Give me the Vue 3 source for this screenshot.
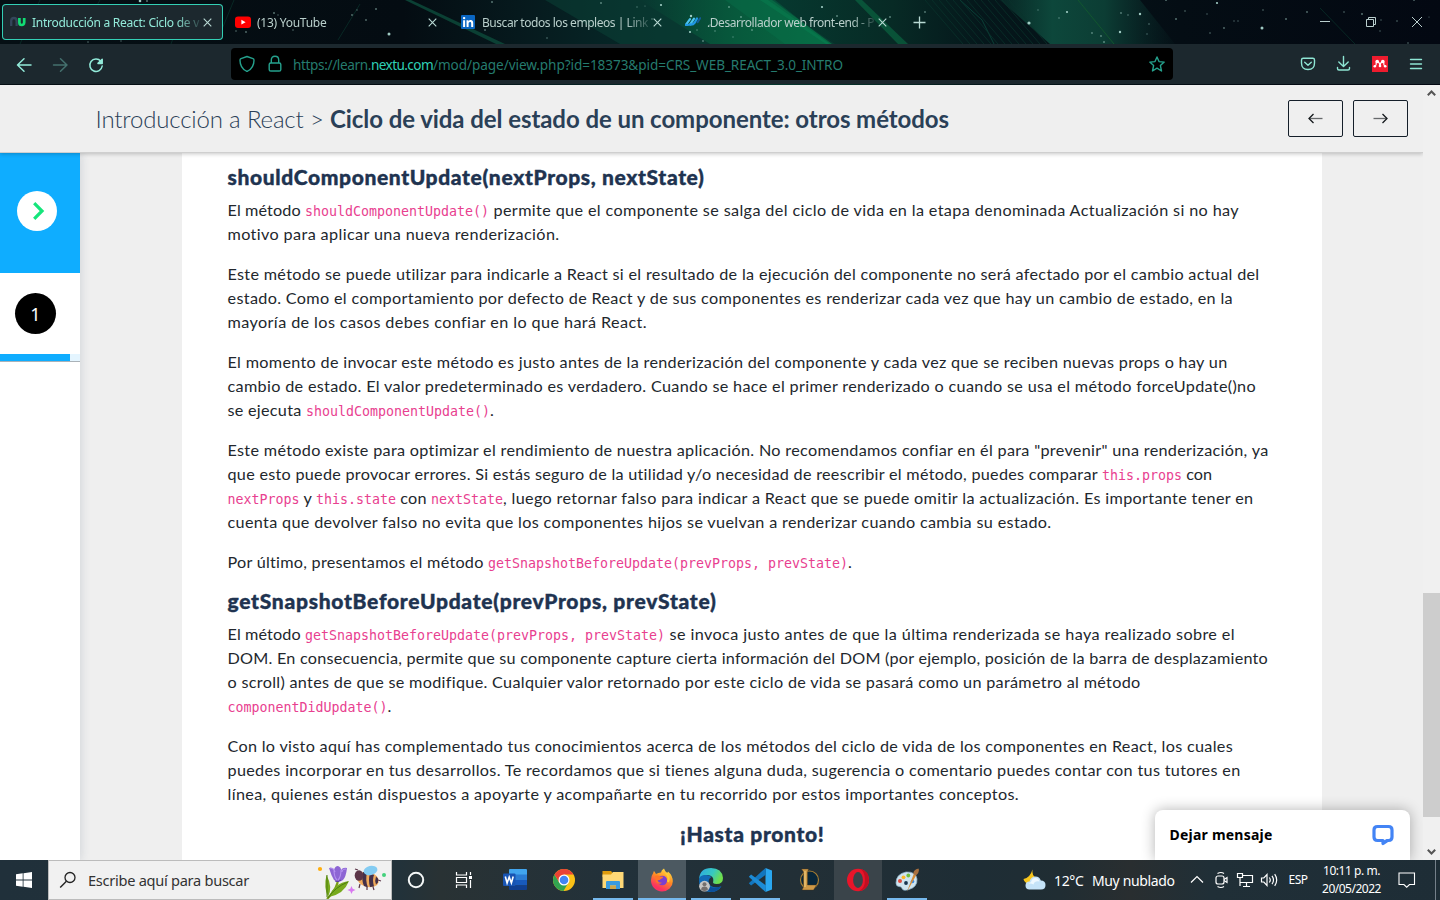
<script setup>
// Spreads the letters of a text run so that it fills the given width.
const vFit = {
  mounted(el, { value }) {
    if (!value) return
    const natural = el.getBoundingClientRect().width
    el.style.letterSpacing = (value - natural) / el.textContent.length + 'px'
  },
}

const t = (text, width) => ({ text, width })
const c = (text) => ({ text, width: text.length * 8, code: true })

const SNAP = 'getSnapshotBeforeUpdate(prevProps, prevState)'

const blocks = [
  { heading: 'shouldComponentUpdate(nextProps, nextState)', width: 477 },
  {
    lines: [
      [t('El método ', 77.5), c('shouldComponentUpdate()'), t(' permite que el componente se salga del ciclo de vida en la etapa denominada Actualización si no hay', 750)],
      [t('motivo para aplicar una nueva renderización.', 332)],
    ],
  },
  {
    lines: [
      [t('Este método se puede utilizar para indicarle a React si el resultado de la ejecución del componente no será afectado por el cambio actual del', 1032)],
      [t('estado. Como el comportamiento por defecto de React y de sus componentes es renderizar cada vez que hay un cambio de estado, en la', 1005.5)],
      [t('mayoría de los casos debes confiar en lo que hará React.', 419.5)],
    ],
  },
  {
    lines: [
      [t('El momento de invocar este método es justo antes de la renderización del componente y cada vez que se reciben nuevas props o hay un', 1000)],
      [t('cambio de estado. El valor predeterminado es verdadero. Cuando se hace el primer renderizado o cuando se usa el método forceUpdate()no', 1028.5)],
      [t('se ejecuta ', 78.5), c('shouldComponentUpdate()'), t('.', 4)],
    ],
  },
  {
    lines: [
      [t('Este método existe para optimizar el rendimiento de nuestra aplicación. No recomendamos confiar en él para "prevenir" una renderización, ya', 1041)],
      [t('que esto puede provocar errores. Si estás seguro de la utilidad y/o necesidad de reescribir el método, puedes comparar ', 874.5), c('this.props'), t(' con', 30)],
      [c('nextProps'), t(' y ', 16.5), c('this.state'), t(' con ', 35), c('nextState'), t(', luego retornar falso para indicar a React que se puede omitir la actualización. Es importante tener en', 750.5)],
      [t('cuenta que devolver falso no evita que los componentes hijos se vuelvan a renderizar cuando cambia su estado.', 824)],
    ],
  },
  { lines: [[t('Por último, presentamos el método ', 260.5), c(SNAP), t('.', 4)]] },
  { heading: SNAP, width: 489 },
  {
    lines: [
      [t('El método ', 77.5), c(SNAP), t(' se invoca justo antes de que la última renderizada se haya realizado sobre el', 570)],
      [t('DOM. En consecuencia, permite que su componente capture cierta información del DOM (por ejemplo, posición de la barra de desplazamiento', 1040.5)],
      [t('o scroll) antes de que se modifique. Cualquier valor retornado por este ciclo de vida se pasará como un parámetro al método', 913)],
      [c('componentDidUpdate()'), t('.', 4)],
    ],
  },
  {
    lines: [
      [t('Con lo visto aquí has complementado tus conocimientos acerca de los métodos del ciclo de vida de los componentes en React, los cuales', 1005.5)],
      [t('puedes incorporar en tus desarrollos. Te recordamos que si tienes alguna duda, sugerencia o comentario puedes contar con tus tutores en', 1013)],
      [t('línea, quienes están dispuestos a apoyarte y acompañarte en tu recorrido por estos importantes conceptos.', 791.5)],
    ],
  },
  { heading: '¡Hasta pronto!', width: 144.5, centered: true },
]

const tabs = [
  { icon: 'nu', title: 'Introducción a React: Ciclo de v', width: 167, active: true },
  { icon: 'yt', title: '(13) YouTube', width: 69.5 },
  { icon: 'in', title: 'Buscar todos los empleos | Link', width: 166 },
  { icon: 'wave', title: '.Desarrollador web front-end - P', width: 167 },
]

const stars = [
  [140, 1, 1.3], [147, 1, 1], [236, 31, .8], [246, 32, .9], [274, 13, 1], [278, 15, .7], [352, 15, .9], [357, 10, .7], [376, 9, 1], [366, 20, .9], [389, 34, 1.5], [88, 42, .8], [293, 30, .8], [121, 41, .7],
  [485, 30, .9], [492, 2, 1], [547, 38, .8], [601, 3, 1], [637, 7, .7], [661, 5, 1.1], [652, 19, .8], [645, 6, .6], [691, 16, 1.2], [729, 7, 1], [741, 17, 1], [752, 30, .9], [710, 25, .8], [822, 7, 1.1], [837, 16, 1], [890, 17, 1], [925, 12, .9], [690, 32, 1.1], [697, 30, .8], [715, 31, .8], [703, 41, .9], [733, 37, .7],
  [1029, 23, 1.6], [1038, 10, .7], [1067, 12, 1.1], [1059, 18, .8], [1121, 13, .9], [1128, 15, .8], [1140, 14, 1.2], [1092, 33, .9], [1101, 36, .9], [1120, 32, 1.2], [1149, 24, .8], [1147, 34, .7], [1104, 42, 1], [1166, 0, 1], [1176, 19, 1], [1185, 11, .8], [1217, 3, 1.1], [1207, 14, .7], [1210, 33, .8], [1224, 28, .9], [1234, 21, .7], [1238, 21, .7], [1262, 28, 1.5], [1263, 10, .8], [1286, 19, 1], [1307, 12, .9], [1344, 12, .8], [1362, 14, 1], [1381, 20, .7], [1397, 21, .8], [1380, 31, .7], [1414, 0, .9], [1408, 43, .8], [1429, 17, .6],
]
const streaks = Array.from({ length: 13 }, (_, i) => 925 + i * 7)

const apps = [
  { icon: 'word' }, { icon: 'chrome' }, { icon: 'folder', open: true }, { icon: 'firefox', open: true, lit: true },
  { icon: 'edge', open: true }, { icon: 'code', open: true }, { icon: 'lol' }, { icon: 'opera', hover: true }, { icon: 'paint', open: true },
]
</script>

<template>
  <div class="screen">
    <header class="tabstrip">
      <svg class="sky" width="1440" height="85" viewBox="0 0 1440 85">
        <defs>
          <linearGradient id="sky" x1="0" x2="1440" y1="0" y2="0" gradientUnits="userSpaceOnUse">
            <stop offset="0" stop-color="#050f14" /><stop offset=".28" stop-color="#040c12" />
            <stop offset=".36" stop-color="#06191d" /><stop offset=".42" stop-color="#062425" />
            <stop offset=".54" stop-color="#06382f" /><stop offset=".62" stop-color="#072a25" />
            <stop offset=".68" stop-color="#05171b" /><stop offset=".82" stop-color="#040d14" /><stop offset="1" stop-color="#030812" />
          </linearGradient>
          <linearGradient id="band" x1="0" x2="1" y1="0" y2="0">
            <stop offset="0" stop-color="#075a3b" stop-opacity="0" /><stop offset=".5" stop-color="#07593c" /><stop offset="1" stop-color="#086a42" />
          </linearGradient>
          <linearGradient id="band2" x1="0" x2="1" y1="0" y2="0">
            <stop offset="0" stop-color="#0d4a3c" stop-opacity=".3" /><stop offset=".3" stop-color="#0d473b" /><stop offset=".6" stop-color="#0c3d34" /><stop offset="1" stop-color="#0a2a2a" stop-opacity=".1" />
          </linearGradient>
        </defs>
        <rect width="1440" height="85" fill="url(#sky)" />
        <path d="M545 0h225l65 44H620z" fill="#0a4437" opacity=".5" />
        <path d="M640 0h132l60 44H710z" fill="url(#band)" />
        <path d="M725 0h50l55 44h-45z" fill="#08744a" opacity=".4" />
        <path d="M768 0l62 44h-4L760 0z" fill="#0a8a55" opacity=".35" />
        <path d="M855 0h7l46 44h-10z" fill="#0a6440" opacity=".7" />
        <path d="M405 0h6l94 44h-9z" fill="#0b4034" />
        <path d="M1000 0h140l35 44h-125z" fill="url(#band2)" />
        <path d="M1078 0l36 44" stroke="#12562f" />
        <path d="M960 0l22 20 12 24" stroke="#0e5c49" opacity=".6" fill="none" />
        <g stroke="#0a352c" opacity=".7"><path v-for="x in streaks" :key="x" :d="`M${x} 0l38 44`" /></g>
        <g stroke="#0b3a30" opacity=".6" stroke-width="1"><path d="M234 0l-14 34M176 30l-5 14M360 4l-22 36M100 0L78 40M40 0L20 44M1320 8l35 36" /></g>
        <circle v-for="(s, i) in stars" :key="i" :cx="s[0]" :cy="s[1]" :r="s[2]" fill="#a9d5cc" :opacity="s[2] > 1 ? .95 : .5" />
      </svg>
      <div v-for="tab in tabs" :key="tab.icon" class="tab" :class="{ active: tab.active }">
        <svg class="fav" width="16" height="16" viewBox="0 0 16 16">
          <g v-if="tab.icon === 'nu'" fill="none" stroke-width="2.3">
            <path d="M1.2 12V7q0-3 2.7-3t2.7 3v5" stroke="#34465a" />
            <path d="M9.4 4v4.5q0 2.5 2.3 2.5t2.5-2.5V4" stroke="#12dc74" stroke-width="2.7" />
          </g>
          <g v-else-if="tab.icon === 'yt'"><rect x="0" y="2.5" width="16" height="11.5" rx="3" fill="#f00" /><path d="M6.4 5.8v4.8l4.2-2.4z" fill="#fff" /></g>
          <g v-else-if="tab.icon === 'in'">
            <rect x="1" y="1" width="14" height="14" rx="1" fill="#0a66c2" />
            <path d="M3.1 6.3h2V13h-2zM6.5 6.3h2V7.4C9 6.5 9.8 6.1 10.7 6.1c1.9 0 2.5 1.3 2.5 3.1V13h-2V9.6c0-1-.2-1.7-1.2-1.7-1 0-1.4.8-1.4 1.7V13h-2z" fill="#fff" /><circle cx="4.1" cy="4.1" r="1.2" fill="#fff" />
          </g>
          <g v-else fill="none" stroke-width="2.2" stroke-linecap="round" stroke-linejoin="round">
            <path d="M1 10.700L5 5.200M5.200 10.300L9 4.600" stroke="#4cc4ee" /><path d="M1 10.900q2.500.3 4.200-.6M5.200 10.500q3 .3 4.600-2L12 4.400" stroke="#1f97e4" /><path d="M12.600 8.200l2.600-4" stroke="#145b97" stroke-width="2" />
          </g>
        </svg>
        <div class="title"><span v-fit="tab.width">{{ tab.title }}</span></div>
        <svg class="x" width="9" height="9" viewBox="0 0 9 9"><path d="M.7.7l7.6 7.6M8.3.7L.7 8.3" /></svg>
      </div>
      <svg class="plus" width="13" height="13" viewBox="0 0 13 13"><path d="M6.5.5v12M.5 6.5h12" /></svg>
      <svg class="winctl" width="104" height="12" viewBox="0 0 104 12"><path d="M1 5.500h10M47.500 3.500h7v7h-7zM49.500 3.500v-2h7v7h-2M93 1l10 10M103 1L93 11" /></svg>
    </header>

    <nav class="toolbar">
      <svg class="navicons" width="90" height="16" viewBox="0 0 90 16">
        <path d="M15 8H1.500M8 1.800L1.500 8 8 14.200" /><path class="dim" d="M37.500 8H51M44.500 1.800L51 8l-6.500 6.200" />
        <path d="M84.800 4.200A6.200 6.200 0 1 0 86.200 9" /><path class="solid" d="M86.200 2.200v4.200H82z" />
      </svg>
      <div class="url">
        <svg class="lockset" width="44" height="18" viewBox="0 0 44 18">
          <path d="M9 1.500l6 2.200q1 .4 1 1.500c0 5-2.400 8.700-6.200 10.800q-.8.400-1.600 0C4.400 13.900 2 10.200 2 5.200q0-1.100 1-1.500z" />
          <rect x="31.200" y="8" width="11.600" height="8" rx="1.600" /><path d="M33.300 8V4.900q0-3.700 3.700-3.700t3.700 3.700V8" />
        </svg>
        <div class="address"><span v-fit="78">https://learn.</span><b v-fit="62">nextu.com</b><span v-fit="410">/mod/page/view.php?id=18373&amp;pid=CRS_WEB_REACT_3.0_INTRO</span></div>
        <svg class="star" width="16" height="16" viewBox="0 0 16 16"><path d="M8 .9l2 4.700 5.200.5-3.800 3.500 1.100 5.400L8 12.200 3.500 15l1.100-5.400L.8 6.100 6 5.600z" /></svg>
      </div>
      <svg class="extras" width="124" height="18" viewBox="0 0 124 18">
        <g fill="none" stroke="#8ee6d4" stroke-width="1.400" stroke-linecap="round" stroke-linejoin="round">
          <path d="M3.200 3.200h9.600q1.700 0 1.700 1.700v3q0 6.600-6.500 6.600T1.500 7.900v-3q0-1.700 1.700-1.700zM4.700 7.200L8 10.200l3.300-3" />
          <path d="M43.500 1.500V11M38.800 7l4.700 4.500L48.200 7M37.500 12.500v1q0 1.500 1.500 1.500h9q1.500 0 1.500-1.500v-1" />
          <path d="M110.500 4.500h11M110.500 9h11M110.500 13.500h11" />
        </g>
        <rect x="72" y="1" width="16" height="16" fill="#ee1c2e" />
        <path d="M75 11.500q1.500-1 1.300-4.500M85 11.500q-1.500-1-1.300-4.500M77.500 6.500q2.300 1 2.500 4.500M82.500 6.500q-2.300 1-2.500 4.500" fill="none" stroke="#fff" stroke-width="1.200" />
        <g fill="#fff"><circle cx="77.200" cy="6.500" r="1.800" /><circle cx="82.800" cy="6.500" r="1.800" /><circle cx="74.800" cy="11.200" r="1.300" /><circle cx="80" cy="11" r="1.300" /><circle cx="85.200" cy="11.200" r="1.300" /></g>
      </svg>
    </nav>

    <section class="page">
      <div class="site">
        <div class="pagehead">
          <h1><span v-fit="234.500">Introducción a React &gt; </span><b v-fit="619">Ciclo de vida del estado de un componente: otros métodos</b></h1>
          <button><svg width="15" height="11" viewBox="0 0 15 11"><path class="shaft" d="M1 5.500h13.500" /><path d="M5.500 1L1 5.500 5.500 10" /></svg></button>
          <button><svg width="15" height="11" viewBox="0 0 15 11"><path class="shaft" d="M.5 5.500H14" /><path d="M9.500 1L14 5.500 9.500 10" /></svg></button>
        </div>
        <div class="columns">
          <aside>
            <div class="toggle"><span><svg width="12" height="18" viewBox="0 0 12 18"><path d="M1.200 1.200L9 9l-7.800 7.800" /></svg></span></div>
            <div class="step"><span>1</span></div>
            <div class="progress"><i></i></div>
          </aside>
          <article>
            <template v-for="(b, i) in blocks" :key="i">
              <h3 v-if="b.heading" :class="{ centered: b.centered }"><span v-fit="b.width">{{ b.heading }}</span></h3>
              <p v-else>
                <span v-for="(line, j) in b.lines" :key="j" class="line"><component :is="s.code ? 'code' : 'span'" v-for="(s, k) in line" :key="k" v-fit="s.width">{{ s.text }}</component></span>
              </p>
            </template>
          </article>
        </div>
        <div class="chat">
          <b v-fit="103">Dejar mensaje</b>
          <svg width="22" height="22" viewBox="0 0 22 22"><path d="M5.500 2.500h11Q20 2.500 20 6v7q0 3.500-3.500 3.500h-1.200q-1.700 1-4.300 3v-3H5.500Q2 16.500 2 13V6Q2 2.500 5.500 2.500z" /></svg>
        </div>
      </div>
      <div class="scroll">
        <svg width="9" height="7" viewBox="0 0 9 7"><path d="M.8 5.300L4.500 1.500l3.700 3.800" /></svg>
        <i></i>
        <svg width="9" height="7" viewBox="0 0 9 7"><path d="M.8 1.700L4.500 5.500l3.700-3.800" /></svg>
      </div>
    </section>

    <footer class="taskbar">
      <div class="start"><svg width="16" height="16" viewBox="0 0 16 16"><path d="M0 2.300L6.700 1.300v6.300H0zM7.500 1.200L16 0v7.600H7.500zM0 8.400h6.700v6.300L0 13.700zM7.500 8.400H16V16l-8.500-1.200z" fill="#fff" /></svg></div>
      <div class="search">
        <svg width="18" height="18" viewBox="0 0 18 18"><circle cx="11" cy="6.500" r="5" fill="none" stroke="#222" stroke-width="1.300" /><path d="M7.400 10.200L1.200 16.400" stroke="#222" stroke-width="1.400" /></svg>
        <span v-fit="161">Escribe aquí para buscar</span>
        <svg class="flowers" width="72" height="38" viewBox="0 0 72 38">
          <circle cx="3" cy="8" r="2.100" fill="#ffae0d" /><circle cx="67" cy="14" r="2" fill="#44d17c" />
          <path d="M21 18q0 9-11 20" stroke="#7a9e18" stroke-width="2.200" fill="none" />
          <path d="M9.500 14q-3 12 1.500 22 5-10-1.500-22zM32 20Q17 22 12 36q15-3 20-16z" fill="#78aa1d" /><path d="M10 14v22M31 21Q18 26 11 37" stroke="#4c7c11" stroke-width="1" fill="none" />
          <path d="M12 7q4-1 5 2 1-4 4-4 3 1 3 4 2-3 6-2-1 9-4 12-4 3-9 0-3-5-5-12z" fill="#8d65d4" /><path d="M17 9q0 7 3 10M24 9q0 7-3 10M13 7q4 0 5 4M29 8q-4 0-4 3" stroke="#b491ef" stroke-width="1.100" fill="none" /><path d="M18 20q3 2 6-1" stroke="#5b3ba5" fill="none" />
          <path d="M34.500 25l1.200 2.800 2.800 1.200-2.800 1.200-1.200 2.800-1.200-2.800-2.800-1.200 2.800-1.200z" fill="#d979f0" />
          <ellipse cx="51" cy="18.500" rx="11" ry="7.500" transform="rotate(14 51 18.500)" fill="#efa95c" />
          <path d="M46 11q-2 7 1 14l4 1.500q-3-7-1-15zM53 12q-2 7 0 14l4-.5q-2-7 0-11.500zM59 15.500q-1.500 4 0 8l2-2v-4z" fill="#43304a" />
          <ellipse cx="42" cy="14.500" rx="4.300" ry="5.200" fill="#5b3548" /><path d="M61 19l3 1M41 9l-3-1M43 23l-1 4M50 26v3M56 26l1 3" stroke="#5b3548" stroke-width="1.200" fill="none" />
          <ellipse cx="53.500" cy="9.500" rx="7" ry="4.500" transform="rotate(-12 53.500 9.500)" fill="#84ccf2" />
        </svg>
      </div>
      <div class="cell"><svg width="18" height="18" viewBox="0 0 18 18"><circle cx="9" cy="9" r="7.200" fill="none" stroke="#f4f7f7" stroke-width="2" /></svg></div>
      <div class="cell view"><svg width="18" height="18" viewBox="0 0 18 18"><path d="M1.500 1v3h10V1M1.500 17v-3h10v3M1.500 6.500h10v5h-10zM15.500 1v3M15.500 9v8" fill="none" stroke="#fff" stroke-width="1.200" /><rect x="14" y="5" width="3" height="3" fill="#fff" /></svg></div>
      <div class="apps">
        <div v-for="a in apps" :key="a.icon" class="app" :class="{ open: a.open, lit: a.lit, hover: a.hover }">
          <svg width="24" height="24" viewBox="0 0 24 24">
            <g v-if="a.icon === 'word'">
              <path d="M6 2q0-1 1-1h16q1 0 1 1v5H6z" fill="#41a5ee" /><path d="M6 6.500h18V12H6z" fill="#2b7cd3" /><path d="M6 12h18v5.500H6z" fill="#185abd" /><path d="M6 17.500h18V21q0 1-1 1H7q-1 0-1-1z" fill="#103f91" />
              <rect x="0" y="5.500" width="12.500" height="12.500" rx="1" fill="#1854b3" /><path d="M2.300 8.500l1.800 6.500L6.200 9l2.200 6 1.800-6.500" fill="none" stroke="#fff" stroke-width="1.600" />
            </g>
            <g v-else-if="a.icon === 'chrome'">
              <circle cx="12" cy="12" r="11" fill="#fbc116" /><path d="M12 12L2.500 6.500A11 11 0 0 1 21.500 6.500H12z" fill="#ea4335" /><path d="M2.500 6.500A11 11 0 0 0 11.500 23l5-8.500L12 12 7.300 14.500z" fill="#32a350" /><path d="M2.500 6.500l4.800 8L12 7z" fill="#ea4335" /><circle cx="12" cy="12" r="5.500" fill="#fff" /><circle cx="12" cy="12" r="4.300" fill="#4285f4" />
            </g>
            <g v-else-if="a.icon === 'folder'">
              <path d="M1.500 3h8.500l2 2.500V9H1.500z" fill="#df9b0d" /><path d="M1.500 6.500H10L12 4h10.500v16h-21z" fill="#ffd876" /><path d="M5 21v-7q0-1 1-1h12q1 0 1 1v7h-4v-3.500H9V21z" fill="#3a9be0" /><path d="M9 17.500h6V21H9z" fill="#cfa64b" />
            </g>
            <g v-else-if="a.icon === 'firefox'">
              <defs><linearGradient id="ff" x1=".8" y1="0" x2=".3" y2="1"><stop offset="0" stop-color="#ffe64a" /><stop offset=".45" stop-color="#ff8c23" /><stop offset=".85" stop-color="#fb3261" /></linearGradient></defs>
              <path d="M14 .5q1 3 3 4.500 1-.8 1-1.500 4.800 4 4.800 10A11 10 0 0 1 12 23.500 11 11 0 0 1 1 12Q1 8 3.200 5q.3-1.500.8-2 1 1 2 3 2-1.500 5-1.500.3-2.500 3-4z" fill="url(#ff)" />
              <circle cx="12.300" cy="12.500" r="4.800" fill="#7b3fd0" /><path d="M5 8q3-1 5 .5l3 .2q.5 1.300-1.800 2-1.500 1.800-4 1.500 1.500 3 5 2.500Q9 17 6 14z" fill="#ff7526" /><path d="M16 5q4 4 2 9" stroke="#ffcb33" stroke-width="2.200" fill="none" />
            </g>
            <g v-else-if="a.icon === 'edge'">
              <defs><linearGradient id="eg" x1="0" y1="0" x2="1" y2=".4"><stop offset="0" stop-color="#2ca7e5" /><stop offset=".6" stop-color="#37c9c0" /><stop offset="1" stop-color="#6fdf4c" /></linearGradient></defs>
              <path d="M0 11Q1 0 12 0t12 10q0 6-6.500 6-4.500 0-3.200-3Q15 8 9 7 3 7 0 11z" fill="url(#eg)" /><path d="M0 12q0-5 7-5 3.500 0 5.500 2-4 2-2.500 6.500T20 19l2.500-.8Q19 24 12 24 0 24 0 12z" fill="#126bb7" /><path d="M8 15q2 7 14 3.500Q18 24 12 24 7 22 8 15z" fill="#0c4f9a" />
              <circle cx="5.500" cy="18.200" r="5.400" fill="#c6c5c3" /><circle cx="5.500" cy="16.300" r="2" fill="#746f6d" /><path d="M2 21.500q.5-3 3.500-3t3.500 3q-3.500 3-7 0z" fill="#746f6d" />
            </g>
            <g v-else-if="a.icon === 'code'">
              <path d="M17.500 0L24 2.500v19L17.500 24z" fill="#2aa7f0" /><path d="M17.500 0L.8 15.200l2.300 2.300L18 6.500z" fill="#1276bf" /><path d="M17.500 24L.8 8.800l2.300-2.300L18 17.500z" fill="#1c8bd6" />
            </g>
            <g v-else-if="a.icon === 'lol'">
              <circle cx="12.500" cy="12" r="9" fill="#08263a" stroke="#a67c32" stroke-width="1.200" /><path d="M4.500 1h7L10.500 4v13h9L16.500 22H5l1.500-3V4z" fill="#ce9947" stroke="#493519" stroke-width=".4" /><path d="M8 3v16" stroke="#f4d386" />
            </g>
            <g v-else-if="a.icon === 'opera'"><ellipse cx="12" cy="12" rx="11" ry="11.300" fill="#e9152a" /><path d="M13 23.300q10-2 10-11.300T14 .7q5 3 5 11.300t-6 11.300z" fill="#c20f22" /><ellipse cx="12" cy="12" rx="4.900" ry="7.900" fill="#3a444a" /></g>
            <g v-else>
              <path d="M1 15Q1 6 11 4q10-.5 11 7 .5 8-8 10.500-6 2-7-1-.3-2-3-2-3-.2-3-3.500z" fill="#cfe4ef" stroke="#8cb3cb" stroke-width=".7" />
              <circle cx="5" cy="13" r="2" fill="#e04c3f" /><circle cx="8.500" cy="9.300" r="1.900" fill="#fcb729" /><circle cx="13.300" cy="7.500" r="1.900" fill="#71bf3d" /><circle cx="17.500" cy="13.500" r="1.800" fill="#3b8be5" /><circle cx="11" cy="15" r="1.900" fill="#17354f" />
              <path d="M12 23.500l6.500-17 2.500 1z" fill="#d68c38" /><path d="M18.300 6.300Q18 2 23.500.5 25 4 21 7.500z" fill="#a9703e" />
            </g>
          </svg>
        </div>
      </div>
      <div class="tray">
        <svg class="weather" width="24" height="22" viewBox="0 0 24 22">
          <path d="M9.500.5q-1 6 4 8.500L5 15q-4-2-4.500-5Q7 9 9.500.5z" fill="#f7c51c" /><path d="M6.500 20.500q-4 0-4-4t4-4Q8 7.500 12.500 7.500q4 0 5.300 4 4.700 0 4.700 4.500t-4.500 4.500z" fill="#c5e3f8" /><path d="M8 13q1-4 4.500-4 3 0 4 3.500-5-1-6 3-2-1.500-5-1z" fill="#eef8ff" />
        </svg>
        <span class="temp" v-fit="29.500">12°C</span><span class="cloudy" v-fit="82.500">Muy nublado</span>
        <svg class="status" width="94" height="20" viewBox="0 0 94 20">
          <g fill="none" stroke="#fff" stroke-width="1.200">
            <path d="M1 12.500l6-6 6 6" /><rect x="26" y="6" width="8" height="8" rx="2" /><path d="M34 9.500l3-2v5l-3-2M27.500 3.500q3.500-2 6.500 0M27.500 16.500q3.500 2 6.500 0" />
            <path d="M53 5.500h9.500v7H50.500M47.500 3.500h5v4h-5zM50 7.500v8.500M56.500 12.500v4M53 16.500h7" /><path d="M71.500 8v4h2.300l3.200 3.500v-11L73.800 8zM79.300 7.500q2 2.500 0 5M82 5.800q3 4.200 0 8.400M84.700 4.200q4 5.800 0 11.600" />
          </g>
        </svg>
        <span class="lang" v-fit="19">ESP</span>
        <div class="clock"><span v-fit="57">10:11 p. m.</span><span v-fit="59">20/05/2022</span></div>
        <svg class="note" width="18" height="18" viewBox="0 0 18 18"><path d="M1 2h15.500v11.500h-5L8.700 16.200l-2.800-2.700H1z" fill="none" stroke="#fff" stroke-width="1.100" /></svg>
        <i class="peek"></i>
      </div>
    </footer>
  </div>
</template>

<style>
body { margin: 0; overflow: hidden; }
</style>

<style scoped>
* { box-sizing: border-box; }
svg { display: block; flex: none; }
.screen { width: 1440px; height: 900px; display: flex; flex-direction: column; overflow: hidden; font-family: "Noto Sans", "Open Sans", sans-serif; background: #efefef; }

.tabstrip { position: relative; height: 44px; flex: none; display: flex; align-items: flex-start; gap: 4px; padding: 4px 0 0 2px; background: #050f14; }
.sky { position: absolute; left: 0; top: 0; }
.tab { position: relative; width: 221px; height: 36px; display: flex; align-items: center; padding: 0 11px 0 8px; color: #b9cfcb; font-size: 12px; }
.tab.active { background: #1c282e; box-shadow: inset 0 0 0 1px #33cfb5; border-radius: 4px; color: #92ead9; }
.tab .title { flex: 1; margin-left: 6px; white-space: pre; line-height: 20px; height: 20px; margin-top: 1px; margin-right: 2px; -webkit-mask-image: linear-gradient(to right, #000 85%, transparent 102%); mask-image: linear-gradient(to right, #000 85%, transparent 102%); }
.x path, .plus path, .winctl path { fill: none; stroke: #b9dad4; stroke-width: 1.1; }
.plus { position: relative; margin: 12px 0 0 11px; }
.plus path { stroke-width: 1.3; }
.winctl { position: relative; margin: 12px 17px 0 auto; }
.winctl path { stroke: #bacfce; stroke-width: 1; }

.toolbar { position: relative; height: 40px; flex: none; display: flex; align-items: center; background: #1c282e; }
.navicons { margin: 1px 0 0 16px; }
.navicons path { fill: none; stroke: #92ead9; stroke-width: 1.5; stroke-linecap: round; stroke-linejoin: round; }
.navicons .dim { stroke: #44706e; }
.navicons .solid { fill: #92ead9; }
.url { width: 942px; height: 32px; margin-left: 125px; background: #000; border-radius: 4px; display: flex; align-items: center; padding: 0 8px 0 7px; }
.lockset path, .lockset rect, .star path { fill: none; stroke: #25a18d; stroke-width: 1.4; stroke-linejoin: round; }
.address { margin-left: 11px; flex: 1; font-size: 13.6px; color: #257b6e; white-space: pre; font-weight: 400; padding-top: 1px; }
.address b { font-weight: 400; color: #2fd0b6; }
.extras { margin: -1px 0 0 127px; }

.page { height: 776px; flex: none; display: flex; border-top: 1px solid #08181b; }
.site { position: relative; width: 1423px; height: 775px; display: flex; flex-direction: column; background: #efefef; overflow: hidden; }
.pagehead { position: relative; z-index: 2; height: 68px; flex: none; display: flex; align-items: center; padding: 0 15px 0 95.5px; background: #efefef; border-bottom: 1px solid #cfcfcf; box-shadow: 0 1px 4px rgba(0, 0, 0, .22); }
h1 { margin: 0; flex: 1; font: 300 24px/36px Lato, sans-serif; color: #2a4057; white-space: pre; }
h1 b { font-weight: 700; }
button { width: 55px; height: 37px; margin-left: 10px; padding: 0; display: flex; align-items: center; justify-content: center; border: 1px solid #141e29; border-radius: 2px; background: none; }
button path { fill: none; stroke: #14181c; stroke-width: 1.3; }
button .shaft { stroke: #66696b; }
.columns { flex: 1; display: flex; min-height: 0; }
aside { width: 80px; background: #fff; box-shadow: 0 0 10px rgba(40, 60, 90, .18); }
.toggle { height: 120px; background: #0fadff; display: flex; align-items: center; padding: 0 0 4px 17px; }
.toggle span { width: 40px; height: 40px; border-radius: 50%; background: #fff; display: flex; align-items: center; justify-content: center; padding-left: 3px; }
.toggle path { fill: none; stroke: #15e57b; stroke-width: 3.2; }
.step { height: 81px; padding: 20px 0 0 15px; }
.step span { width: 41px; height: 41px; border-radius: 50%; background: #000; color: #fff; display: flex; align-items: center; justify-content: center; font-size: 18px; padding-top: 1px; }
.progress { height: 8px; background: #e4f5ff; border-bottom: 1px solid #aab2b8; }
.progress i { display: block; width: 70px; height: 7px; background: #0fadff; }
article { width: 1140px; margin-left: 102px; background: #fff; padding: 13px 45px 0 45.5px; overflow: hidden; color: #22272d; font: 400 16.2px/24px Lato, sans-serif; }
h3 { margin: 0 0 8px; height: 24px; font: 900 21px/22px Lato, sans-serif; color: #203350; white-space: pre; -webkit-text-stroke: .4px #203350; }
h3.centered { text-align: center; padding-top: 1px; }
p { margin: 0 0 16px; }
.line { display: block; height: 24px; white-space: pre; font-variant-ligatures: none; }
code { font-family: "DejaVu Sans Mono", "Liberation Mono", monospace; font-size: 13.3px; color: #e8408f; line-height: 20px; }
.chat { position: absolute; z-index: 3; right: 13px; bottom: 0; width: 255px; height: 50px; background: #fff; border-radius: 8px 8px 0 0; box-shadow: 0 0 14px rgba(0, 0, 0, .3); display: flex; align-items: center; justify-content: space-between; padding: 0 16px 0 14.5px; color: #000; font-size: 14px; white-space: pre; }
.chat b { margin-top: -1px; }
.chat path { fill: none; stroke: #4384f5; stroke-width: 3.2; stroke-linejoin: round; }
.scroll { width: 17px; background: #f0f0f0; display: flex; flex-direction: column; align-items: center; padding: 5px 0 5px; }
.scroll i { width: 17px; height: 224px; background: #cdcdcd; margin: 496px 0 auto; }
.scroll path { fill: none; stroke: #555; stroke-width: 2; }

.taskbar { height: 40px; flex: none; display: flex; background: linear-gradient(90deg, #20303a 0, #22323a 400px, #293234 440px, #22313a 620px, #222f36 800px, #1e2d35 980px, #202d33 1060px, #292e30 1130px, #202f37 1210px, #1e2d36); color: #fff; }
.start { width: 48px; display: flex; align-items: center; justify-content: center; }
.search { width: 344px; background: #f1f1f1; border: 1px solid #bcbcbc; display: flex; align-items: center; padding-left: 10px; color: #333; font-size: 14.6px; white-space: pre; }
.search span { margin-left: 11px; }
.flowers { margin-left: 67.5px; }
.cell { width: 48px; display: flex; align-items: center; justify-content: center; }
.view { width: 51px; padding-right: 3px; }
.apps { display: flex; gap: 1px; }
.app { width: 48px; height: 40px; display: flex; align-items: center; justify-content: center; position: relative; }
.open::after { content: ""; position: absolute; left: 4px; right: 4px; bottom: 0; height: 2px; background: #76b9ed; }
.lit { background: #4c5961; }
.lit::after { left: 0; right: 0; }
.hover { background: #3a444a; }
.tray { flex: 1; display: flex; align-items: center; white-space: pre; font-size: 14px; }
.weather { margin-left: 91.5px; }
.temp { margin-left: 7.5px; }
.cloudy { margin-left: 8.5px; }
.temp, .cloudy { padding-top: 1px; }
.status { margin-left: 15px; }
.lang { margin-left: 5px; font-size: 12px; margin-top: -2px; }
.clock { width: 60px; margin-left: 14px; display: flex; flex-direction: column; align-items: center; font-size: 12px; line-height: 18px; margin-top: -1px; }
.note { margin-left: 16px; }
.peek { width: 1px; height: 40px; background: #75808a; margin-left: auto; margin-right: 4px; }
</style>
